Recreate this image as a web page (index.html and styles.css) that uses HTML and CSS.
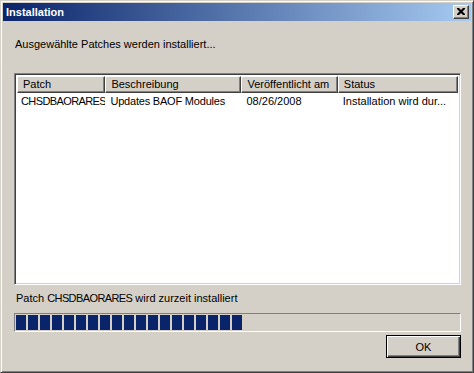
FILE: index.html
```
<!DOCTYPE html>
<html>
<head>
<meta charset="utf-8">
<link rel="stylesheet" href="styles.css">
</head>
<body>
<div class="window">
  <div class="titlebar">
    <span class="title">Installation</span>
    <span class="close"><svg width="8" height="7" viewBox="0 0 8 7"><path d="M0 0h2l2 2 2-2h2v1l-2.5 2.5L8 6v1H6L4 5 2 7H0V6l2.5-2.5L0 1z" fill="#000"/></svg></span>
  </div>
  <div class="content">
    <div class="intro">Ausgewählte Patches werden installiert...</div>
    <div class="list">
      <div class="header">
        <div class="hcell c1">Patch</div>
        <div class="hcell c2">Beschreibung</div>
        <div class="hcell c3">Veröffentlicht am</div>
        <div class="hcell c4">Status</div>
      </div>
      <div class="row">
        <div class="cell c1"><span class="code">CHSDBAORARES</span></div>
        <div class="cell c2"><span class="code2">Updates BAOF Modules</span></div>
        <div class="cell c3">08/26/2008</div>
        <div class="cell c4">Installation wird dur...</div>
      </div>
    </div>
    <div class="status">Patch <span class="code">CHSDBAORARES</span> wird zurzeit installiert</div>
    <div class="progress">
      <span class="blk"></span><span class="blk"></span><span class="blk"></span><span class="blk"></span><span class="blk"></span><span class="blk"></span><span class="blk"></span><span class="blk"></span><span class="blk"></span><span class="blk"></span><span class="blk"></span><span class="blk"></span><span class="blk"></span><span class="blk"></span><span class="blk"></span><span class="blk"></span><span class="blk"></span><span class="blk"></span><span class="blk"></span>
    </div>
    <div class="buttons">
      <div class="btn">OK</div>
    </div>
  </div>
</div>
</body>
</html>
```
FILE: styles.css
```
* { box-sizing: border-box; }
html, body { margin: 0; padding: 0; background: #d4d0c8; }
body {
  font-family: "Liberation Sans", Arial, sans-serif;
  font-size: 11px;
  color: #000;
}
.window {
  width: 474px;
  height: 373px;
  background: #d4d0c8;
  border-top: 1px solid #d4d0c8;
  border-left: 1px solid #d4d0c8;
  border-right: 1px solid #404040;
  border-bottom: 1px solid #404040;
  box-shadow: inset 1px 1px #fff, inset -1px -1px #808080;
  padding: 2px;
  display: flex;
  flex-direction: column;
}
.titlebar {
  height: 18px;
  background: linear-gradient(to right, #0a246a, #a6caf0);
  display: flex;
  align-items: center;
  justify-content: space-between;
  padding: 0 2px 0 3px;
}
.title {
  color: #fff;
  font-weight: bold;
  font-size: 11px;
  line-height: 13px;
}
.close {
  width: 16px;
  height: 14px;
  background: #d4d0c8;
  border-top: 1px solid #fff;
  border-left: 1px solid #fff;
  border-right: 1px solid #404040;
  border-bottom: 1px solid #404040;
  box-shadow: inset -1px -1px #808080;
  display: flex;
  align-items: center;
  justify-content: center;
  padding: 0 1px 1px 0;
}
.close svg { display: block; }
.content {
  flex: 1;
  display: flex;
  flex-direction: column;
  padding: 17px 10px 0 11px;
}
.intro { line-height: 13px; padding-left: 1px; }
.list {
  margin-top: 22px;
  height: 212px;
  background: #fff;
  border-top: 1px solid #808080;
  border-left: 1px solid #808080;
  border-right: 1px solid #fff;
  border-bottom: 1px solid #fff;
  box-shadow: inset 1px 1px #404040, inset -1px -1px #d4d0c8;
  padding: 2px;
}
.header { display: flex; height: 17px; }
.hcell {
  background: #d4d0c8;
  border-top: 1px solid #fff;
  border-left: 1px solid #fff;
  border-right: 1px solid #404040;
  border-bottom: 1px solid #404040;
  box-shadow: inset -1px -1px #808080;
  line-height: 14px;
  padding-left: 5px;
  white-space: nowrap;
  overflow: hidden;
}
.c1 { width: 89px; }
.c2 { width: 137px; }
.c3 { width: 97px; }
.c4 { width: 121px; }
.row { display: flex; height: 16px; margin-top: 1px; }
.cell { line-height: 14px; padding-left: 5px; white-space: nowrap; overflow: hidden; }
.row .c1 { padding-left: 4px; }
.code { letter-spacing: -0.6px; }
.code2 { letter-spacing: -0.2px; }
.status { margin-top: 7px; line-height: 13px; padding-left: 2px; }
.progress {
  margin-top: 8px;
  height: 19px;
  border-top: 1px solid #808080;
  border-left: 1px solid #808080;
  border-right: 1px solid #fff;
  border-bottom: 1px solid #fff;
  padding: 1px 1px;
  display: flex;
  gap: 2px;
}
.blk { width: 10px; height: 100%; background: #0a246a; }
.buttons { display: flex; justify-content: flex-end; margin-top: 3px; }
.btn {
  width: 75px;
  height: 23px;
  border: 1px solid #000;
  box-shadow: inset 1px 1px #fff, inset -1px -1px #404040, inset -2px -2px #808080;
  display: flex;
  align-items: center;
  justify-content: center;
  padding-top: 1px;
}
```
